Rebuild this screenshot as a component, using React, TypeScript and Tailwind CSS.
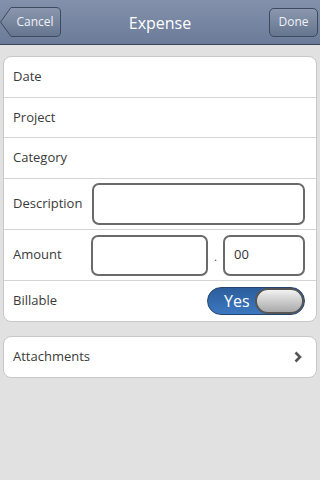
import React from "react";

const font = { fontFamily: '"Open Sans", "Liberation Sans", sans-serif' };

function Row({ children, last }: { children: React.ReactNode; last?: boolean }) {
  return (
    <div className={`flex items-center px-[9px] ${last ? "" : "border-b border-[#d4d4d4]"}`}>
      {children}
    </div>
  );
}

export default function App() {
  return (
    <div className="w-[320px] h-[480px] bg-[#e1e1e1] flex flex-col" style={font}>
      <div className="h-[45px] bg-gradient-to-b from-[#8391ab] to-[#6b7b98] border-b border-[#3a4659] flex items-center justify-between relative">
        <div className="relative w-[61px] h-[30px] ml-0 flex items-center justify-center">
          <svg className="absolute inset-0" width="61" height="30" viewBox="0 0 61 30">
            <defs>
              <linearGradient id="cg" x1="0" y1="0" x2="0" y2="1">
                <stop offset="0" stopColor="#8a97ae" />
                <stop offset="1" stopColor="#66758f" />
              </linearGradient>
            </defs>
            <path d="M11 0.5 H56 Q60.5 0.5 60.5 5 V25 Q60.5 29.5 56 29.5 H11 L0.5 15 Z" fill="url(#cg)" stroke="#3e4a5e" strokeWidth="1" />
          </svg>
          <span className="relative text-[12px] text-[#eef1f6] ml-[9px] mt-[-1px]">Cancel</span>
        </div>
        <span className="absolute left-0 right-0 text-center text-[16px] text-white pointer-events-none top-[11px]">Expense</span>
        <div className="w-[49px] h-[29px] mr-[2px] rounded-[5px] border border-[#3e4a5e] bg-gradient-to-b from-[#8a97ae] to-[#66758f] flex items-center justify-center">
          <span className="text-[12px] text-[#eef1f6]">Done</span>
        </div>
      </div>

      <div className="mx-[3px] mt-[11px] bg-white rounded-[8px] border border-[#c8c8c8] flex flex-col text-[13px] text-[#3a3a3a]">
        <div className="h-[41px] flex items-center px-[9px] border-b border-[#d4d4d4]">Date</div>
        <div className="h-[40px] flex items-center px-[9px] border-b border-[#d4d4d4]">Project</div>
        <div className="h-[41px] flex items-center px-[9px] border-b border-[#d4d4d4]">Category</div>
        <div className="h-[51px] flex items-center pl-[9px] pr-[11px] border-b border-[#d4d4d4]">
          <span className="w-[79px]">Description</span>
          <div className="flex-1 h-[42px] rounded-[7px] border-2 border-[#6a6a6a] bg-white" />
        </div>
        <div className="h-[51px] flex items-center pl-[9px] pr-[11px] border-b border-[#d4d4d4]">
          <span className="w-[78px]">Amount</span>
          <div className="w-[117px] h-[41px] rounded-[7px] border-2 border-[#6a6a6a] bg-white" />
          <span className="w-[15px] text-center text-[10px] mt-[4px]">.</span>
          <div className="flex-1 h-[41px] rounded-[7px] border-2 border-[#6a6a6a] bg-white flex items-center pl-[9px] text-[13px] text-[#333]">00</div>
        </div>
        <div className="h-[40px] flex items-center justify-between pl-[9px] pr-[11px]">
          <span>Billable</span>
          <div className="relative w-[98px] h-[28px] rounded-full border border-[#26456e] bg-gradient-to-b from-[#2c5e9c] to-[#3c78c0] overflow-hidden flex items-center">
            <span className="text-white text-[16px] ml-[16px] mt-[-1px]">Yes</span>
            <div className="absolute right-0 top-0 w-[49px] h-[26px] rounded-full border-2 border-[#555] bg-gradient-to-b from-[#f2f2f2] to-[#a9a9a9]" />
          </div>
        </div>
      </div>

      <div className="mx-[3px] mt-[14px] h-[42px] bg-white rounded-[8px] border border-[#c8c8c8] flex items-center justify-between pl-[9px] pr-[14px] text-[13px] text-[#3a3a3a]">
        <span>Attachments</span>
        <svg width="8" height="12" viewBox="0 0 8 12">
          <path d="M1.5 1.5 L6 6 L1.5 10.5" fill="none" stroke="#555" strokeWidth="2.6" />
        </svg>
      </div>
    </div>
  );
}
